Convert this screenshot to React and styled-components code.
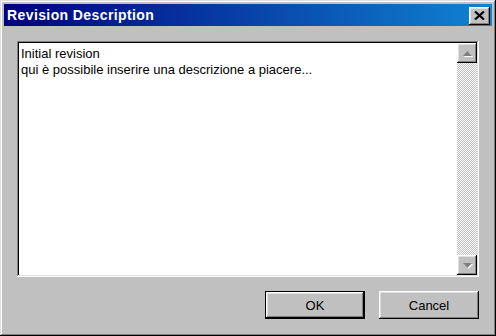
import React from 'react';
import styled, { createGlobalStyle } from 'styled-components';

const Global = createGlobalStyle`
  html, body {
    margin: 0;
    padding: 0;
    background: #c0c0c0;
  }
  * {
    box-sizing: border-box;
  }
`;

const raised = `
  box-shadow: inset -1px -1px #000, inset 1px 1px #fff,
    inset -2px -2px #808080, inset 2px 2px #dfdfdf;
`;

const Window = styled.div`
  width: 496px;
  height: 336px;
  padding: 4px;
  display: flex;
  flex-direction: column;
  background: #c0c0c0;
  font-family: 'Liberation Sans', Arial, sans-serif;
  box-shadow: inset -1px -1px #000, inset 1px 1px #dfdfdf,
    inset -2px -2px #808080, inset 2px 2px #fff;
`;

const TitleBar = styled.div`
  height: 22px;
  display: flex;
  align-items: center;
  justify-content: space-between;
  padding: 0 2px 0 3px;
  background: linear-gradient(90deg, #000080, #1084d0);
  color: #fff;
`;

const Title = styled.span`
  font-weight: bold;
  font-size: 14px;
  letter-spacing: 0.4px;
`;

const CloseBtn = styled.div`
  width: 21px;
  height: 18px;
  margin-top: 1px;
  display: flex;
  align-items: center;
  justify-content: center;
  background: #c0c0c0;
  ${raised}
`;

const Body = styled.div`
  flex: 1;
  display: flex;
  flex-direction: column;
  gap: 14px;
  padding: 15px 13px 13px 13px;
`;

const Field = styled.div`
  flex: 1;
  display: flex;
  padding: 2px;
  background: #fff;
  box-shadow: inset -1px -1px #fff, inset 1px 1px #808080,
    inset -2px -2px #dfdfdf, inset 2px 2px #000;
`;

const Text = styled.div`
  flex: 1;
  padding: 3px 2px;
  font-size: 13px;
  line-height: 16px;
  color: #000;
`;

const ScrollBar = styled.div`
  width: 20px;
  display: flex;
  flex-direction: column;
  background-color: #fff;
  background-image: repeating-conic-gradient(#c0c0c0 0 25%, #fff 0 50%);
  background-size: 2px 2px;
`;

const Track = styled.div`
  flex: 1;
`;

const ArrowBtn = styled.div`
  width: 20px;
  height: 20px;
  display: flex;
  align-items: center;
  justify-content: center;
  background: #c0c0c0;
  ${raised}
`;

const Footer = styled.div`
  display: flex;
  justify-content: flex-end;
  gap: 14px;
`;

const Button = styled.div`
  width: 100px;
  height: 28px;
  display: flex;
  align-items: center;
  justify-content: center;
  background: #c0c0c0;
  font-size: 13px;
  color: #000;
  ${(p) =>
    p.$default
      ? `box-shadow: inset -1px -1px #000, inset 1px 1px #000,
          inset -2px -2px #000, inset 2px 2px #fff,
          inset -3px -3px #808080, inset 3px 3px #dfdfdf;`
      : raised}
`;

const UpArrow = () => (
  <svg width="11" height="7" viewBox="0 0 11 7" style={{ display: 'block' }}>
    <polygon points="5.5,1 10,6 1,6" fill="#fff" transform="translate(1 1)" />
    <polygon points="5.5,1 10,6 1,6" fill="#808080" />
  </svg>
);

const DownArrow = () => (
  <svg width="11" height="7" viewBox="0 0 11 7" style={{ display: 'block' }}>
    <polygon points="1,1 10,1 5.5,6" fill="#fff" transform="translate(1 1)" />
    <polygon points="1,1 10,1 5.5,6" fill="#808080" />
  </svg>
);

const CloseIcon = () => (
  <svg width="11" height="9" viewBox="0 0 11 9" style={{ display: 'block' }}>
    <path d="M1 0.5 L10 8.5 M10 0.5 L1 8.5" stroke="#000" strokeWidth="2.2" />
  </svg>
);

export default function App() {
  return (
    <>
      <Global />
      <Window>
        <TitleBar>
          <Title>Revision Description</Title>
          <CloseBtn>
            <CloseIcon />
          </CloseBtn>
        </TitleBar>
        <Body>
          <Field>
            <Text>
              Initial revision
              <br />
              qui è possibile inserire una descrizione a piacere...
            </Text>
            <ScrollBar>
              <ArrowBtn>
                <UpArrow />
              </ArrowBtn>
              <Track />
              <ArrowBtn>
                <DownArrow />
              </ArrowBtn>
            </ScrollBar>
          </Field>
          <Footer>
            <Button $default>OK</Button>
            <Button>Cancel</Button>
          </Footer>
        </Body>
      </Window>
    </>
  );
}
